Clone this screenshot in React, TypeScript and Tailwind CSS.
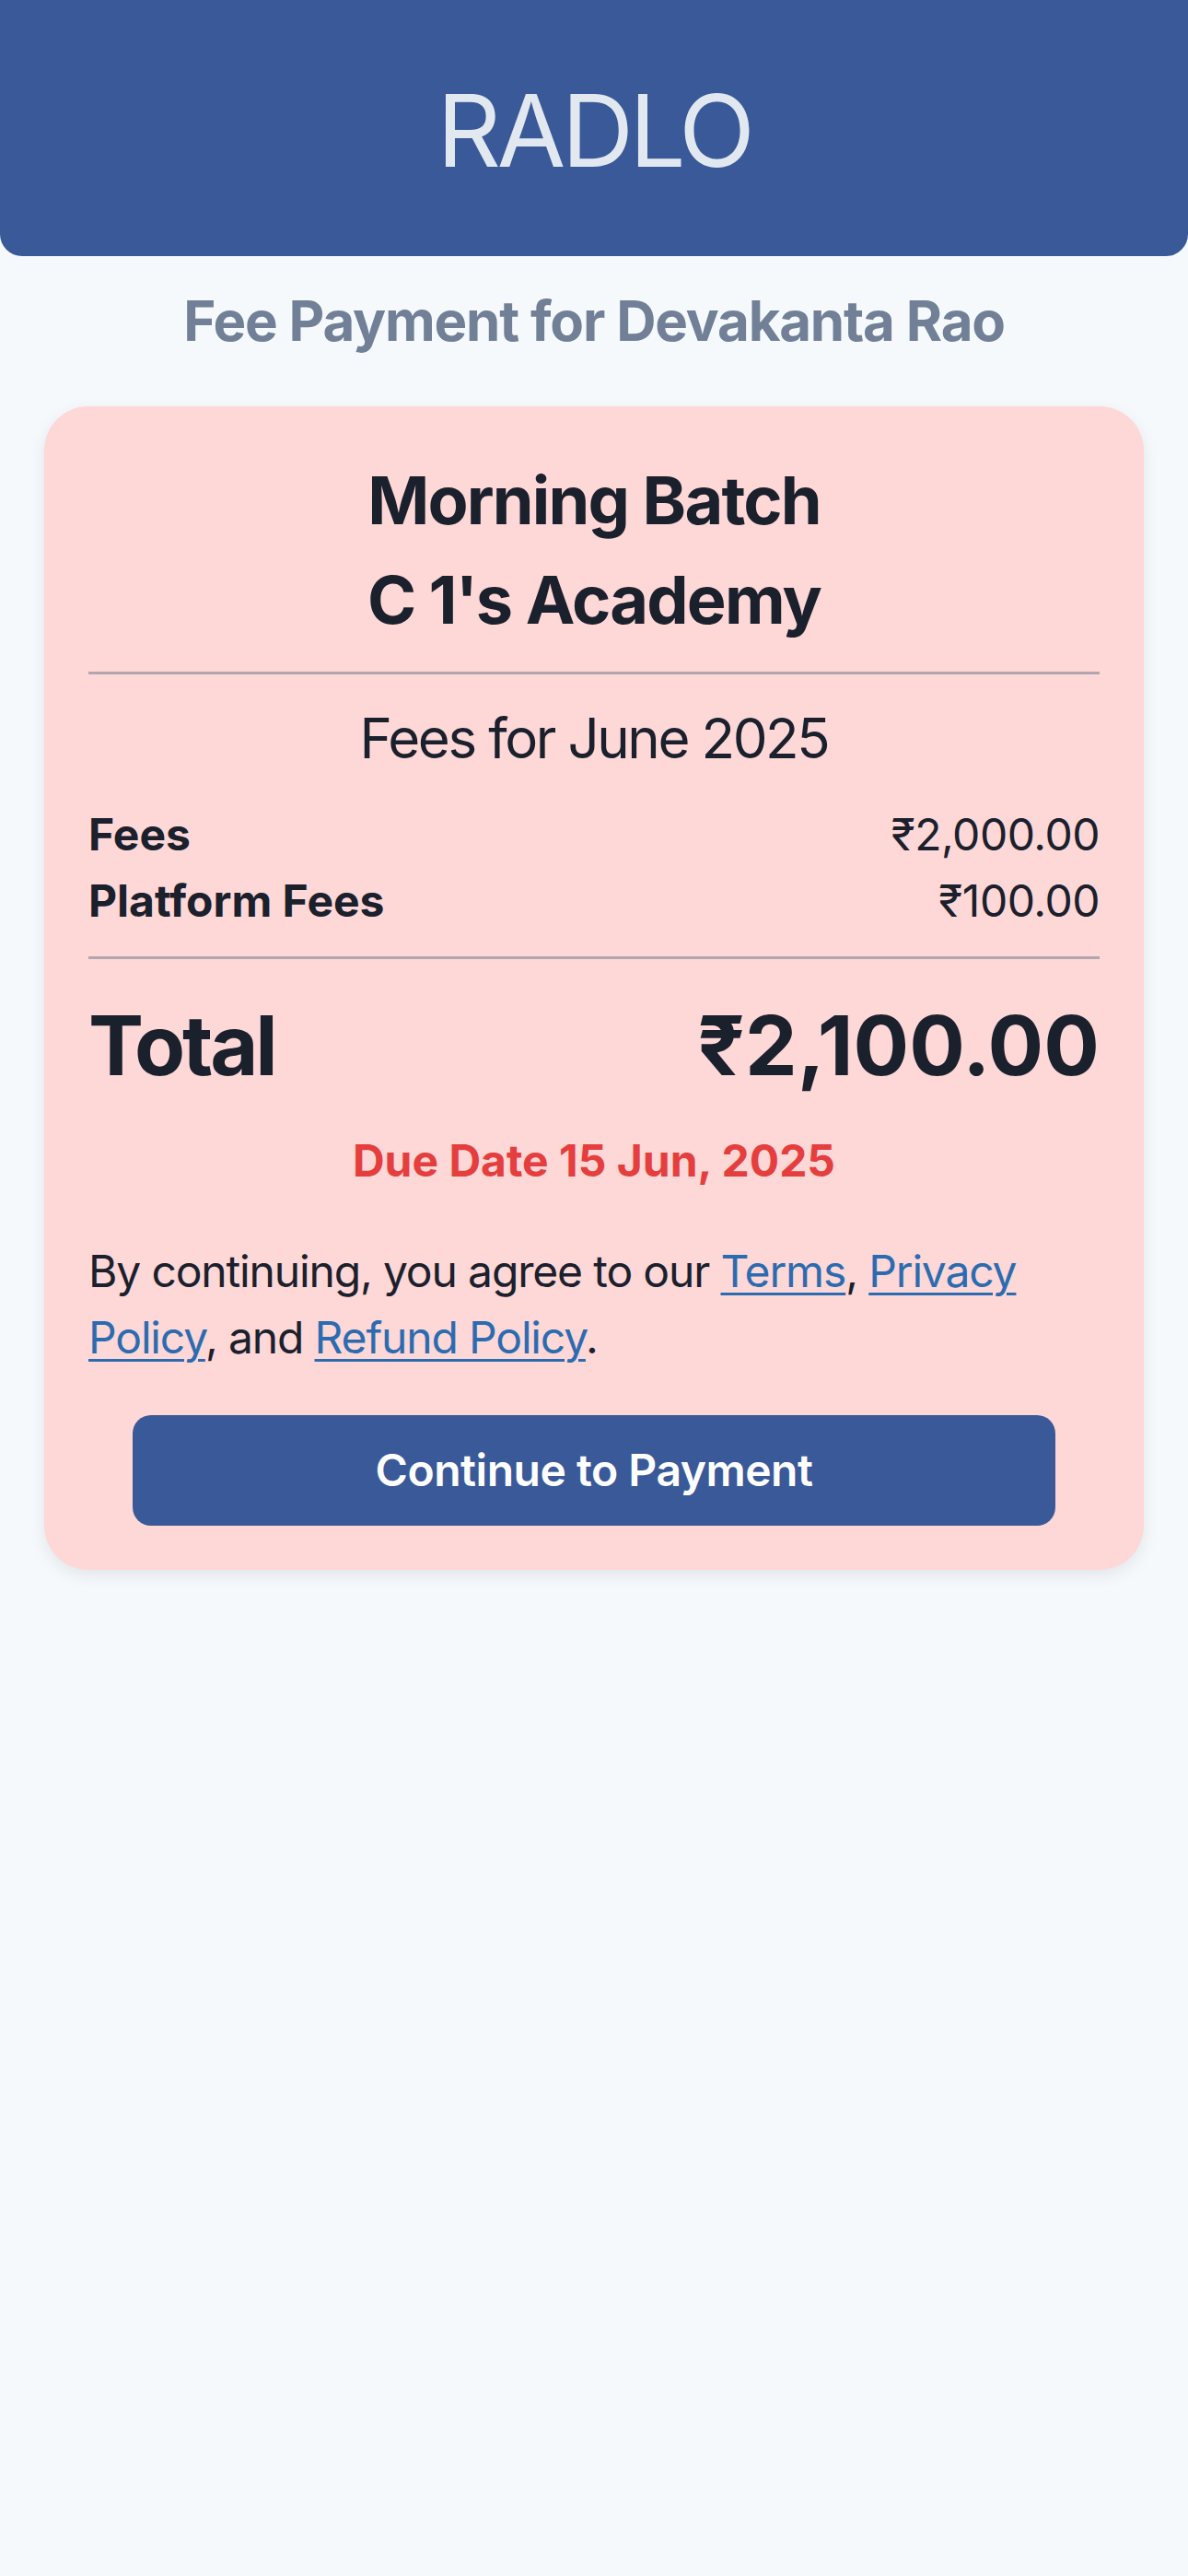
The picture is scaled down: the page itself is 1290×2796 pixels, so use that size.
import React from "react";

const rows = [
  { label: "Fees", amount: "₹2,000.00" },
  { label: "Platform Fees", amount: "₹100.00" },
];

export default function App() {
  return (
    <div className="min-h-[2796px] w-full bg-[#f5f9fc] font-['Inter',sans-serif] text-[#1a202c]">
      <header className="rounded-b-[24px] bg-[#3a5998] pb-[76px] pt-[82px] text-center">
        <h1 className="text-[108px] font-normal leading-[120px] tracking-[-0.04em] text-[#e2e8f0]">RADLO</h1>
      </header>

      <h2 className="pt-[28px] text-center text-[60px] font-bold leading-[84px] tracking-[-0.02em] text-[#718096]">
        Fee Payment for Devakanta Rao
      </h2>

      <main className="mx-[48px] mt-[51px] rounded-[48px] bg-[#fed7d7] p-[48px] shadow-[0_6px_18px_rgba(0,0,0,0.08)]">
        <div className="text-center text-[72px] font-bold leading-[108px] tracking-[-0.025em]">
          <div>Morning Batch</div>
          <div>C 1's Academy</div>
        </div>

        <hr className="mt-[24px] border-0 border-t-[3px] border-[#b1a6ae]" />

        <p className="mt-[27px] text-center text-[60px] leading-[84px] tracking-[-0.04em]">Fees for June 2025</p>

        <div className="mt-[27px] flex flex-col">
          {rows.map((r) => (
            <div key={r.label} className="flex items-center justify-between text-[48px] leading-[72px]">
              <span className="font-bold">{r.label}</span>
              <span className="tracking-[-0.01em]">{r.amount}</span>
            </div>
          ))}
        </div>

        <hr className="mt-[24px] border-0 border-t-[3px] border-[#b1a6ae]" />

        <div className="mt-[40px] flex items-center justify-between text-[90px] font-bold leading-[108px]">
          <span className="tracking-[-0.035em]">Total</span>
          <span>₹2,100.00</span>
        </div>

        <p className="mt-[35px] text-center text-[48px] font-bold leading-[72px] text-[#e53e3e]">
          Due Date 15 Jun, 2025
        </p>

        <p className="mt-[48px] text-[48px] leading-[72px] tracking-[-0.024em]">
          By continuing, you agree to our{" "}
          <a href="#" className="text-[#2b6cb0] underline decoration-[3px] underline-offset-[6px]">Terms</a>,{" "}
          <a href="#" className="text-[#2b6cb0] underline decoration-[3px] underline-offset-[6px]">Privacy Policy</a>, and{" "}
          <a href="#" className="text-[#2b6cb0] underline decoration-[3px] underline-offset-[6px]">Refund Policy</a>.
        </p>

        <button className="mx-[48px] mt-[48px] flex h-[120px] w-[calc(100%-96px)] items-center justify-center rounded-[20px] bg-[#3a5998] text-[48px] font-semibold tracking-[-0.01em] text-white">
          Continue to Payment
        </button>
      </main>
    </div>
  );
}
